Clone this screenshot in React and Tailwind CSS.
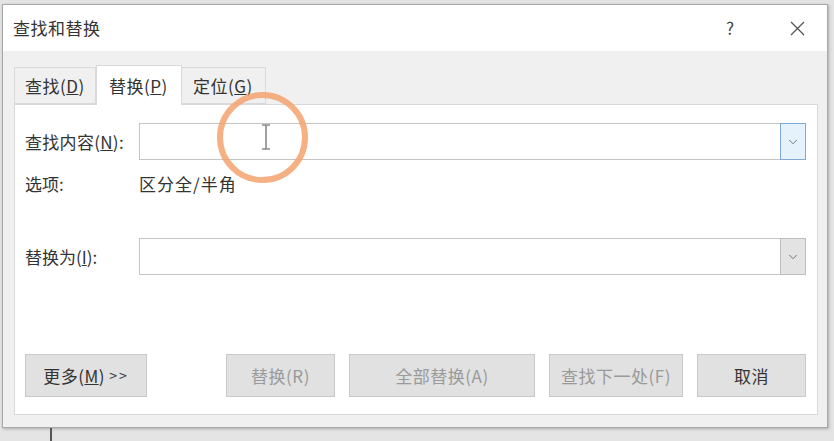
import { ChevronDown } from 'lucide-react';

const font = { fontFamily: '"Microsoft YaHei", "Noto Sans CJK SC", "Liberation Sans", sans-serif' };

const Tab = ({ label, active, className = "" }) => (
    <div
        className={
            (active
                ? "h-[40px] -mb-px flex items-center bg-white border border-b-0 border-[#d9d9d9] relative z-10 "
                : "h-[37px] flex items-center bg-[#f0f0f0] border border-[#d9d9d9] -ml-px first:ml-0 ") + className
        }
    >
        <span className="text-[17px] tracking-[0.5px] text-[#333]">{label}</span>
    </div>
);

const Combo = ({ focused }) => (
    <div className="flex-1 h-[37px] flex bg-white border border-[#c4c4c4]">
        <div className="flex-1" />
        <div
            className={
                focused
                    ? "w-[26px] -my-px -mr-px flex items-center justify-center bg-[#e5f1fb] border border-[#7ea9d8]"
                    : "w-[26px] -my-px -mr-px flex items-center justify-center bg-[#e3e3e3] border border-[#bdbdbd]"
            }
        >
            <ChevronDown className="w-[14px] h-[14px] text-[#666]" strokeWidth={1.5} />
        </div>
    </div>
);

const Btn = ({ children, className, disabled }) => (
    <div
        className={
            "h-[43px] flex items-center justify-center bg-[#e1e1e1] border border-[#c8c8c8] text-[17px] tracking-[0.5px] " +
            (disabled ? "text-[#9a9a9a] " : "text-[#333] ") +
            className
        }
    >
        {children}
    </div>
);

const App = () => {
    return (
        <div className="w-[834px] h-[441px] bg-[#e4e4e4] flex flex-col overflow-hidden relative" style={font}>
            <div className="h-[4px]" />
            <div className="ml-[2px] w-[826px] h-[424px] flex flex-col border border-[#a8a8a8] shadow-[1px_1px_3px_rgba(0,0,0,0.25)]">
                {/* Title bar */}
                <div className="h-[46px] bg-white flex items-center pl-[10px] pr-[22px]">
                    <span className="text-[17px] tracking-[0.5px] text-[#333]">查找和替换</span>
                    <span className="ml-auto text-[17px] text-[#444] mr-[56px]">?</span>
                    <svg width="15" height="15" viewBox="0 0 15 15" className="text-[#555]">
                        <path d="M1 1 L14 14 M14 1 L1 14" stroke="currentColor" strokeWidth="1.3" fill="none" />
                    </svg>
                </div>

                {/* Body */}
                <div className="flex-1 bg-[#f0f0f0] pl-[11px] pr-[9px] pt-[13px] pb-[12px] flex flex-col">
                    {/* Tabs */}
                    <div className="flex items-end h-[40px]">
                        <Tab className="w-[82px] pl-[10px]" label={<>查找(<u>D</u>)</>} />
                        <Tab className="w-[86px] pl-[12px]" label={<>替换(<u>P</u>)</>} active />
                        <Tab className="w-[85px] pl-[11px]" label={<>定位(<u>G</u>)</>} />
                    </div>

                    {/* Panel */}
                    <div className="flex-1 bg-white border border-[#d9d9d9] pl-[10px] pr-[11px] pt-[18px] flex flex-col relative">
                        <div className="flex items-center">
                            <span className="w-[114px] text-[17px] tracking-[0.3px] text-[#333]">查找内容(<u>N</u>):</span>
                            <Combo focused />
                        </div>
                        <div className="flex items-center h-[24px] mt-[12px]">
                            <span className="w-[114px] text-[17px] text-[#333]">选项:</span>
                            <span className="text-[17px] tracking-[1px] text-[#333]">区分全/半角</span>
                        </div>

                        <div className="flex items-center mt-[42px]">
                            <span className="w-[114px] text-[17px] text-[#333]">替换为(<u>I</u>):</span>
                            <Combo />
                        </div>

                        <div className="flex items-center mt-[79px]">
                            <Btn className="w-[122px]">更多(<u>M</u>)&nbsp;<span className="text-[14px] tracking-[2px]">&gt;&gt;</span></Btn>
                            <Btn className="w-[109px] ml-[79px]" disabled>替换(R)</Btn>
                            <Btn className="w-[186px] ml-[14px]" disabled>全部替换(A)</Btn>
                            <Btn className="w-[134px] ml-[14px]" disabled>查找下一处(F)</Btn>
                            <Btn className="w-[109px] ml-[14px]">取消</Btn>
                        </div>
                    </div>
                </div>
            </div>
            {/* Strip below the dialog */}
            <div className="flex-1 flex">
                <div className="ml-[50px] w-[2px] bg-[#555]" />
            </div>

            {/* Highlight circle and cursor overlay */}
            <div className="absolute left-[217px] top-[92px] w-[91px] h-[91px] rounded-full border-[6px] border-[#f3a26f]/85" />
            <svg className="absolute left-[261px] top-[124px]" width="10" height="26" viewBox="0 0 10 26">
                <path d="M1 1 H9 M5 1 V25 M1 25 H9" stroke="#8a8a8a" strokeWidth="1.6" fill="none" />
            </svg>
        </div>
    );
};

export default App;
